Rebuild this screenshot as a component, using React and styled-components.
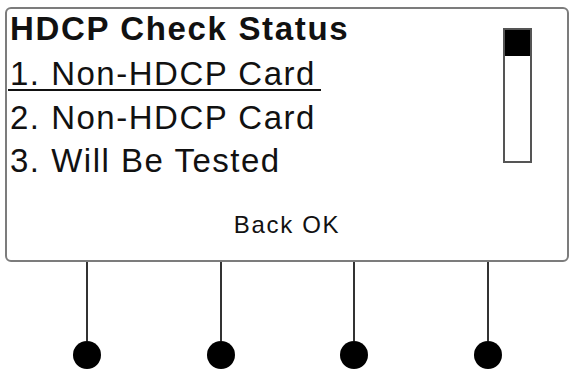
import React from 'react'
import styled, { createGlobalStyle } from 'styled-components'

const GlobalStyle = createGlobalStyle`
  html, body {
    margin: 0;
    padding: 0;
    background: #ffffff;
  }
  body {
    font-family: "Liberation Sans", Arial, sans-serif;
    color: #111;
  }
`

const Page = styled.div`
  width: 574px;
  height: 371px;
  padding: 7px 0 0 5px;
  box-sizing: border-box;
  overflow: hidden;
`

const Screen = styled.div`
  width: 564px;
  height: 255px;
  box-sizing: border-box;
  border: 2px solid #7c7c7c;
  border-radius: 6px;
  display: flex;
  flex-direction: column;
`

const Body = styled.div`
  flex: 1;
  display: flex;
  justify-content: space-between;
`

const Menu = styled.div`
  padding-left: 3px;
  display: flex;
  flex-direction: column;
`

const Title = styled.div`
  font-size: 33px;
  font-weight: 700;
  line-height: 40px;
  letter-spacing: 1.65px;
  margin-bottom: 3px;
  white-space: nowrap;
`

const Item = styled.div`
  font-size: 33px;
  line-height: 43.5px;
  letter-spacing: 1.5px;
  white-space: nowrap;
`

const Selected = styled.span`
  display: inline-block;
  line-height: 31px;
  margin-left: -2px;
  padding: 0 5px 0 2px;
  border-bottom: 2.5px solid #111;
`

const Scrollbar = styled.div`
  width: 29px;
  height: 135px;
  box-sizing: border-box;
  margin: 19px 35px 0 0;
  border: 2px solid #555;
  background: #fff;
`

const Thumb = styled.div`
  height: ${p => p.$size}px;
  background: #000;
`

const Footer = styled.div`
  text-align: center;
  font-size: 24px;
  line-height: 30px;
  letter-spacing: 1.7px;
  padding-bottom: 20px;
`

const Keys = styled.div`
  width: 535px;
  margin-left: 15px;
  display: flex;
`

const Key = styled.div`
  flex: 1;
  display: flex;
  flex-direction: column;
  align-items: center;
`

const Stem = styled.div`
  width: 2px;
  height: 79px;
  background: #333;
`

const Dot = styled.div`
  width: 28px;
  height: 28px;
  border-radius: 50%;
  background: #000;
`

const items = ['1. Non-HDCP Card', '2. Non-HDCP Card', '3. Will Be Tested']

const App = () => {
  return (
    <Page>
      <GlobalStyle />
      <Screen>
        <Body>
          <Menu>
            <Title>HDCP Check Status</Title>
            {items.map((label, i) => (
              <Item key={label + i}>
                {i === 0 ? <Selected>{label}</Selected> : label}
              </Item>
            ))}
          </Menu>
          <Scrollbar>
            <Thumb $size={26} />
          </Scrollbar>
        </Body>
        <Footer>Back OK</Footer>
      </Screen>
      <Keys>
        {[0, 1, 2, 3].map(k => (
          <Key key={k}>
            <Stem />
            <Dot />
          </Key>
        ))}
      </Keys>
    </Page>
  )
}

export default App
